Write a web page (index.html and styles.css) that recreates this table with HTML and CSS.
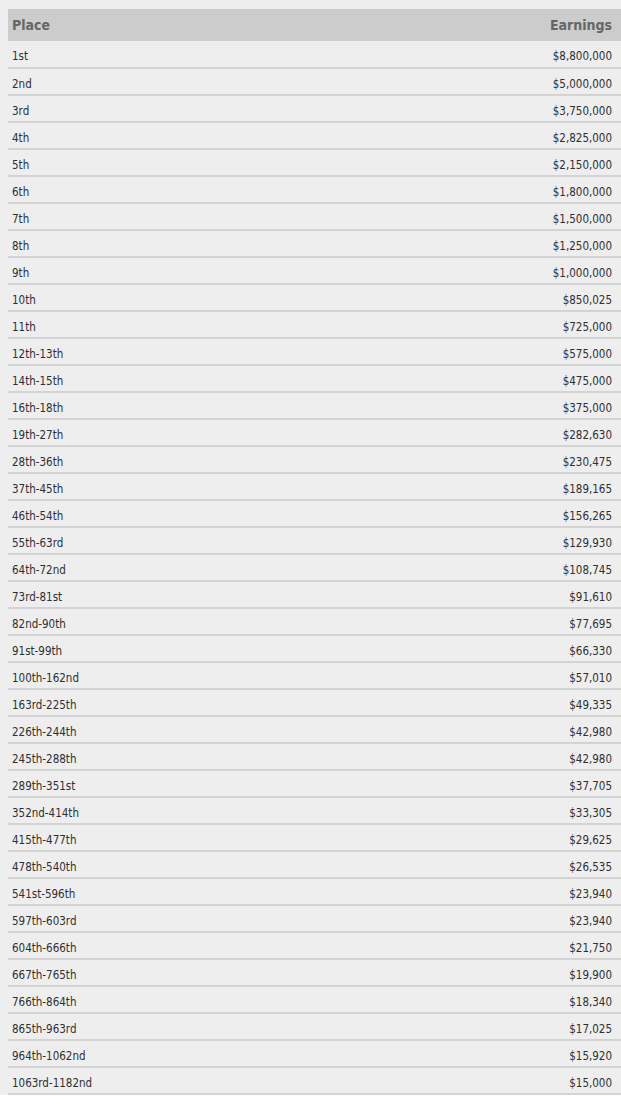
FILE: index.html
```html
<!DOCTYPE html>
<html>
<head>
<meta charset="utf-8">
<link rel="stylesheet" href="styles.css">
</head>
<body>
<div class="wrap">
<table class="payouts">
<thead>
<tr><th class="place">Place</th><th class="earn">Earnings</th></tr>
</thead>
<tbody>
<tr><td>1st</td><td class="earn">$8,800,000</td></tr>
<tr><td>2nd</td><td class="earn">$5,000,000</td></tr>
<tr><td>3rd</td><td class="earn">$3,750,000</td></tr>
<tr><td>4th</td><td class="earn">$2,825,000</td></tr>
<tr><td>5th</td><td class="earn">$2,150,000</td></tr>
<tr><td>6th</td><td class="earn">$1,800,000</td></tr>
<tr><td>7th</td><td class="earn">$1,500,000</td></tr>
<tr><td>8th</td><td class="earn">$1,250,000</td></tr>
<tr><td>9th</td><td class="earn">$1,000,000</td></tr>
<tr><td>10th</td><td class="earn">$850,025</td></tr>
<tr><td>11th</td><td class="earn">$725,000</td></tr>
<tr><td>12th-13th</td><td class="earn">$575,000</td></tr>
<tr><td>14th-15th</td><td class="earn">$475,000</td></tr>
<tr><td>16th-18th</td><td class="earn">$375,000</td></tr>
<tr><td>19th-27th</td><td class="earn">$282,630</td></tr>
<tr><td>28th-36th</td><td class="earn">$230,475</td></tr>
<tr><td>37th-45th</td><td class="earn">$189,165</td></tr>
<tr><td>46th-54th</td><td class="earn">$156,265</td></tr>
<tr><td>55th-63rd</td><td class="earn">$129,930</td></tr>
<tr><td>64th-72nd</td><td class="earn">$108,745</td></tr>
<tr><td>73rd-81st</td><td class="earn">$91,610</td></tr>
<tr><td>82nd-90th</td><td class="earn">$77,695</td></tr>
<tr><td>91st-99th</td><td class="earn">$66,330</td></tr>
<tr><td>100th-162nd</td><td class="earn">$57,010</td></tr>
<tr><td>163rd-225th</td><td class="earn">$49,335</td></tr>
<tr><td>226th-244th</td><td class="earn">$42,980</td></tr>
<tr><td>245th-288th</td><td class="earn">$42,980</td></tr>
<tr><td>289th-351st</td><td class="earn">$37,705</td></tr>
<tr><td>352nd-414th</td><td class="earn">$33,305</td></tr>
<tr><td>415th-477th</td><td class="earn">$29,625</td></tr>
<tr><td>478th-540th</td><td class="earn">$26,535</td></tr>
<tr><td>541st-596th</td><td class="earn">$23,940</td></tr>
<tr><td>597th-603rd</td><td class="earn">$23,940</td></tr>
<tr><td>604th-666th</td><td class="earn">$21,750</td></tr>
<tr><td>667th-765th</td><td class="earn">$19,900</td></tr>
<tr><td>766th-864th</td><td class="earn">$18,340</td></tr>
<tr><td>865th-963rd</td><td class="earn">$17,025</td></tr>
<tr><td>964th-1062nd</td><td class="earn">$15,920</td></tr>
<tr><td>1063rd-1182nd</td><td class="earn">$15,000</td></tr>
</tbody>
</table>
</div>
</body>
</html>
```
FILE: styles.css
```css
html, body {
  margin: 0;
  padding: 0;
  background: #ffffff;
}
.wrap {
  background: #eeeeee;
  padding: 9px 0 0 8px;
}
.payouts {
  width: 613px;
  border-collapse: collapse;
  font-family: "DejaVu Sans Condensed", "DejaVu Sans", sans-serif;
  font-size: 11.5px;
  color: #2e2e33;
}
.payouts th {
  background: #cccccc;
  color: #666666;
  font-size: 14px;
  font-weight: bold;
  height: 32px;
  padding: 0 9px 0 4px;
  text-align: left;
  box-sizing: border-box;
}
.payouts th.earn {
  text-align: right;
}
.payouts td {
  height: 27px;
  padding: 4px 9px 0 4px;
  border-bottom: 2px solid #d3d3d3;
  box-sizing: border-box;
}
.payouts td.earn {
  text-align: right;
}
```
